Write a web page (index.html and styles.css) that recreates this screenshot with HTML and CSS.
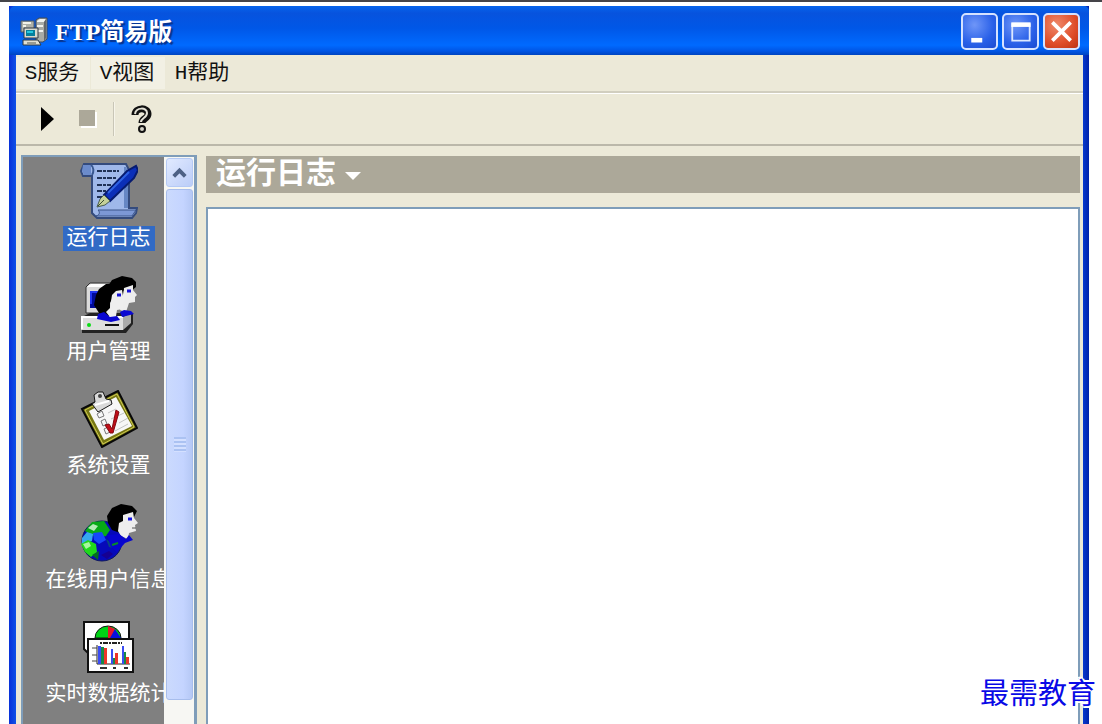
FILE: index.html
```html
<!DOCTYPE html>
<html lang="zh-CN">
<head>
<meta charset="utf-8">
<title>FTP简易版</title>
<link rel="stylesheet" href="styles.css">
</head>
<body>
<div class="window">
  <header class="titlebar">
    <svg class="app-icon" viewBox="0 0 28 29" aria-hidden="true">
      <path d="M1 4h13v11H1z" fill="#aeb0a8" stroke="#4d5968"/>
      <path d="M3 6h8M3 9h3" stroke="#f2f2e9" stroke-width="2"/>
      <path d="M16 3l3-2h8v21l-4 3h-7z" fill="#a9aba6" stroke="#3f4a58"/>
      <path d="M17 4l3-2h6l-2 3h-7zM17 8h6v2h-6zM17 13h6v2h-6z" fill="#f1f2ee"/>
      <path d="M24 5v19l2-3V2z" fill="#62666a"/>
      <path d="M4 11h14v10H4z" fill="#d9dad0" stroke="#303945"/>
      <path d="M6 13h9v6H6z" fill="#057f9c"/>
      <path d="M7 14h6v2H7z" fill="#25c7df"/>
      <path d="M3 23h15l3 5H3z" fill="#dfdfd2" stroke="#30383f"/>
      <path d="M7 26h9" stroke="#52564f"/>
    </svg>
    <h1 class="title">FTP简易版</h1>
    <div class="controls">
      <button class="control" type="button" aria-label="最小化"><svg viewBox="0 0 36 36"><path d="M9 25h12v5H9z" fill="#fff"/></svg></button>
      <button class="control" type="button" aria-label="最大化"><svg viewBox="0 0 36 36"><path d="M9 10h19v18H9z" fill="none" stroke="#dce8ff" stroke-width="2"/><path d="M8 8h21v5H8z" fill="#fff"/></svg></button>
      <button class="control control-close" type="button" aria-label="关闭"><svg viewBox="0 0 36 36"><path d="M8 8l20 20M28 8L8 28" stroke="#fff" stroke-width="4"/></svg></button>
    </div>
  </header>

  <nav class="menubar">
    <button class="menu" type="button">S服务</button>
    <button class="menu" type="button">V视图</button>
    <button class="menu" type="button">H帮助</button>
  </nav>

  <div class="toolbar">
    <button class="tool" type="button" aria-label="启动"><svg viewBox="0 0 28 28"><path d="M8 2v24l13-12z" fill="#000"/></svg></button>
    <button class="tool" type="button" aria-label="停止"><svg viewBox="0 0 28 28"><path d="M8 7h16v16H8z" fill="#fff"/><path d="M6 5h16v16H6z" fill="#aca899"/></svg></button>
    <span class="separator"></span>
    <button class="tool" type="button" aria-label="帮助"><svg viewBox="0 0 28 28"><path d="M8 10c0-8 13-8 13-1 0 5-6 4-6 9" fill="none" stroke="#111" stroke-width="7"/><path d="M8 9c1-7 12-7 12-1 0 5-6 5-6 9" fill="none" stroke="#e4e2d7" stroke-width="2"/><circle cx="15" cy="24" r="3" fill="#d5d3c8" stroke="#111" stroke-width="2"/></svg></button>
  </div>

  <div class="workspace">
    <aside class="sidebar">
      <div class="items">
        <button class="item selected" type="button">
          <svg class="item-icon" viewBox="0 0 58 58" aria-hidden="true">
            <path d="M4 2h42l3 6v38h8l-1 5-4 5H17l-5-5V14H3L1 9z" fill="#9fb8ea" stroke="#344b7d" stroke-width="2"/>
            <path d="M3 3h8v10H4L2 9z" fill="#6b8bcb"/><path d="M11 3c3 2 3 7 1 10" fill="none" stroke="#38578f" stroke-width="2"/>
            <path d="M18 48h38l-4 6H16c4-1 4-4 2-6z" fill="#7c98d6" stroke="#3a5489"/>
            <path d="M46 5l2 4v37h-4V5z" fill="#6687c4"/>
            <path d="M17 9h22M17 16h19M17 23h14M17 29h9M17 35h6" stroke="#1f3156" stroke-width="2" stroke-dasharray="5 1 3 1"/>
            <path d="M49 17l-5 8" stroke="#1d2e5b" stroke-width="3"/>
            <path d="M24 33L47 9l9-5 2 4-4 8-24 23z" fill="#0b2fb8" stroke="#061b70" stroke-width="2"/>
            <path d="M28 31L49 10" stroke="#2f62e3" stroke-width="2"/>
            <path d="M24 33l6 6-5 4-8 2 3-8z" fill="#c5d198" stroke="#485d51"/><path d="M18 44l6-6" stroke="#394a30"/>
          </svg>
          <span class="label">运行日志</span>
        </button>
        <button class="item" type="button">
          <svg class="item-icon" viewBox="0 0 58 58" aria-hidden="true">
            <path d="M6 11l4-4h23v30H6z" fill="#dadada" stroke="#333"/><path d="M7 11l4-3h20l-2 3z" fill="#fff"/>
            <path d="M10 15h16v17H10z" fill="#000b97"/><path d="M11 28V16h8" fill="none" stroke="#2035ee" stroke-width="2"/>
            <path d="M2 41l8-4h43v11l-7 9H2z" fill="#222"/><path d="M1 41h42v13H1z" fill="#dedede"/><path d="M43 41l8-4v10l-8 7z" fill="#aaa"/>
            <path d="M1 41h42M2 41v12" stroke="#fff" stroke-width="2"/><path d="M25 49h14" stroke="#111" stroke-width="2"/><circle cx="9" cy="49" r="2" fill="#0bdc16"/>
            <path d="M28 10l4-6 10-4 10 2 4 4v5l-5 4-9 14-8 2z" fill="#000"/>
            <path d="M44 12l9-3v5l4 5-2 2v5l-6 1-3 9-6-2 2-9z" fill="#ededed"/><path d="M47 15h4" stroke="#1712d4" stroke-width="3"/><path d="M40 36l4-2 7 1 3 3-12 3z" fill="#0b08d1"/>
            <path d="M16 19l3-6 7-5 10-1 6 3 2 4-4 3-6 2-4 8v11l-5 2-6-3-5-8z" fill="#000"/>
            <path d="M32 19l4-4 6-1 1 6 2 5-2 2v6l-6 1-1 6-6 1-4-5 4-4z" fill="#eee"/><path d="M37 19h4" stroke="#1712d4" stroke-width="3"/>
            <path d="M18 38l6-2 6 5 7-1 3 4-9 2-14-3z" fill="#0906d1"/>
          </svg>
          <span class="label">用户管理</span>
        </button>
        <button class="item" type="button">
          <svg class="item-icon" viewBox="0 0 58 58" aria-hidden="true">
            <path d="M2 19L38 1l19 37-35 19z" fill="#777713" stroke="#080808" stroke-width="2"/>
            <path d="M5 20L37 4l17 33-31 17z" fill="none" stroke="#d1cc56" stroke-width="1"/>
            <path d="M9 21l27-14 16 29-28 14z" fill="#f7f7f7"/>
            <path d="M17 24l5-3 2 5-5 2zM21 31l4-2 2 5-4 2zM24 39l4-2 2 5-4 2z" fill="none" stroke="#777" stroke-width="1"/>
            <path d="M28 23l8-4M31 29l13-6M39 33l9-5M35 41l13-7" stroke="#c4c4c4" stroke-width="1"/>
            <path d="M25 35l4-1 3 5 4-19 3 2-6 21h-3z" fill="#c10e18" stroke="#81070f" stroke-width="1"/>
            <path d="M12 14l3-2-1-7 4-3h5l3 7 5 1 1 4-14 8z" fill="#d9d9d9" stroke="#171717"/><path d="M15 15l14-4" stroke="#fff" stroke-width="2"/><circle cx="20" cy="6" r="2" fill="#444"/>
          </svg>
          <span class="label">系统设置</span>
        </button>
        <button class="item" type="button">
          <svg class="item-icon" viewBox="0 0 58 58" aria-hidden="true">
            <circle cx="22" cy="37" r="20" fill="#0609b9" stroke="#111b5c"/>
            <path d="M5 27l7-9 12-1 6 9-4 6-9 2-7-4z" fill="#07ab17"/><path d="M8 24l5-4 5 2-4 5z" fill="#b3ecb6"/>
            <path d="M2 34l5-6 6 2-1 7-10 3z" fill="#36a7ef"/><path d="M13 29l9-1 4 8-7 4-5-4z" fill="#1647fb"/>
            <path d="M1 40l7-4 8 4 1 8-6 5-6-5z" fill="#21d91b"/><path d="M3 40l6-2 2 4-5 3z" fill="#a8f6a0"/><path d="M12 51l7-4-1 9z" fill="#046d20"/><path d="M26 35l7 5 6-2-2 7-8-2z" fill="#074583"/><path d="M21 51l8-4 4 3-6 5z" fill="#160092"/>
            <path d="M27 12L32 4l9-4 11 2 5 5-3 6-10 4-4 12-8-3-4-7z" fill="#000"/>
            <path d="M43 11l10-3 1 6 4 5-3 2 1 6-7 2-1 6-7-3-3-5 1-8 4-2z" fill="#ededed"/><path d="M48 15h4" stroke="#1714e1" stroke-width="3"/><path d="M52 24h4" stroke="#555" stroke-width="1"/>
            <path d="M27 31l12-1 7 5 3-4 4 5-8 3-8 9-6-5z" fill="#0705cf"/><path d="M32 41l6-2" stroke="#058d28" stroke-width="2"/>
          </svg>
          <span class="label">在线用户信息</span>
        </button>
        <button class="item" type="button">
          <svg class="item-icon" viewBox="0 0 58 58" aria-hidden="true">
            <path d="M4 4h45v31H8l-4-4z" fill="#fff" stroke="#111" stroke-width="2"/>
            <path d="M15 20a13 12 0 0 1 26 0z" fill="#00d315" stroke="#111"/><path d="M28 20V8l7 3-3 9z" fill="#e4162b"/><path d="M30 20l5-9 6 9z" fill="#0711de"/>
            <path d="M8 21h45v33H8z" fill="#fff" stroke="#111" stroke-width="2"/>
            <path d="M20 25h22" stroke="#222" stroke-width="2" stroke-dasharray="2 1 5 1"/><path d="M17 27v19h33" fill="none" stroke="#222"/><path d="M12 30h5M12 37h5M12 43h5" stroke="#444"/>
            <path d="M18 28h3v18h-3zM31 31h2v15h-2zM42 28h2v18h-2z" fill="#3b4cf3"/><path d="M21 29h3v17h-3zM33 40h2v6h-2zM44 34h2v12h-2z" fill="#178a45"/><path d="M24 30h3v16h-3zM35 35h3v11h-3zM46 39h3v7h-3z" fill="#ed3529"/>
            <path d="M20 50h7M33 50h3M44 50h4" stroke="#333" stroke-width="2"/>
          </svg>
          <span class="label">实时数据统计</span>
        </button>
      </div>
      <div class="scrollbar">
        <button class="scroll-up" type="button" aria-label="向上滚动"><svg viewBox="0 0 26 28"><path d="M7 18l6-6 6 6" fill="none" stroke="#4d6185" stroke-width="4"/></svg></button>
        <div class="thumb"><span class="grip"></span></div>
      </div>
    </aside>
    <main class="content">
      <button class="heading" type="button">运行日志<svg class="arrow" viewBox="0 0 16 8" aria-hidden="true"><path d="M0 0h16L8 8z" fill="#fff"/></svg></button>
      <textarea class="log" aria-label="运行日志" readonly></textarea>
    </main>
  </div>
</div>
<div class="watermark">最需教育</div>
</body>
</html>
```
FILE: styles.css
```css
* { box-sizing: border-box; }

body {
  margin: 0;
  height: 100vh;
  display: flex;
  overflow: hidden;
  background: #fff;
  border-top: 2px solid #454449;
  padding: 4px 13px 0 9px;
  font-family: "Liberation Mono", "Noto Sans CJK SC", sans-serif;
}

button {
  margin: 0;
  padding: 0;
  border: 0;
  background: none;
  color: inherit;
  font: inherit;
}

svg { display: block; }

.window {
  flex: 1;
  min-width: 0;
  display: flex;
  flex-direction: column;
  background: #ece9d8;
  border: solid #0741dc;
  border-width: 0 6px 0 7px;
  border-image: linear-gradient(90deg, #0831d9, #1665f0 1%, #0c4cec 99%, #0022a9) 6 6 0 7;
  border-radius: 8px 5px 0 0;
}

.titlebar {
  flex: none;
  height: 49px;
  margin: 0 -6px 0 -7px;
  padding: 2px 9px 0 11px;
  display: flex;
  align-items: center;
  border-radius: 7px 5px 0 0;
  background: linear-gradient(#0663ec 0, #0753de 15%, #0057e7 45%, #006aff 80%, #0055e5 92%, #0044c0);
}

.app-icon { width: 28px; height: 29px; }

.title {
  flex: 1;
  margin: 0 0 0 7px;
  color: #fff;
  font: bold 24px/32px "Liberation Serif", "Noto Sans CJK SC", serif;
  text-shadow: 2px 2px 1px #07348f;
}

.controls { display: flex; gap: 4px; }

.control {
  width: 37px;
  height: 37px;
  border: 2px solid #d5e2ff;
  border-radius: 5px;
  background: radial-gradient(circle at 35% 30%, #6f96f8, #2960e8 60%, #1b4bd1);
}

.control-close { background: radial-gradient(circle at 35% 30%, #ef8a6b, #df4d29 60%, #bd3212); }

.menubar {
  flex: none;
  height: 38px;
  display: flex;
  gap: 1px;
  padding-top: 2px;
  border-bottom: 2px solid #d1cebf;
}

.menu {
  width: 74px;
  height: 32px;
  padding: 2px 2px 0 0;
  background: #f2f0e4;
  color: #111;
  font-size: 21px;
  line-height: 30px;
  white-space: nowrap;
}

.menu:last-child { background: none; }

.toolbar {
  flex: none;
  height: 53px;
  display: flex;
  align-items: center;
  gap: 12px;
  padding-left: 17px;
  border-top: 1px solid #fff;
  border-bottom: 2px solid #bbb8aa;
}

.tool { width: 28px; height: 28px; }

.separator {
  width: 2px;
  height: 34px;
  background: #c9c6b7;
  border-right: 1px solid #f7f5ea;
}

.workspace {
  flex: 1;
  min-height: 0;
  display: grid;
  grid-template-columns: 176px minmax(0, 1fr);
  gap: 9px;
  padding: 9px 3px 0 5px;
}

.sidebar {
  min-height: 0;
  display: grid;
  grid-template-columns: minmax(0, 1fr) 30px;
  grid-template-rows: minmax(0, 1fr);
  overflow: hidden;
  background: #808080;
  border: solid #7f9db9;
  border-width: 2px 3px 0 2px;
}

.items {
  grid-area: 1 / 1 / 2 / 3;
  display: flex;
  flex-direction: column;
  align-items: center;
  gap: 25px;
  padding-top: 5px;
}

.item {
  flex: none;
  display: flex;
  flex-direction: column;
  align-items: center;
  gap: 6px;
  color: #fff;
  font-size: 21px;
  line-height: 25px;
  white-space: nowrap;
}

.item-icon { width: 58px; height: 58px; }

.label { height: 25px; padding: 0 4px; }

.selected .label { background: #316ac5; }

.scrollbar {
  grid-area: 1 / 2 / 2 / 3;
  display: flex;
  flex-direction: column;
  gap: 2px;
  padding: 1px 1px 24px 2px;
  background: #f7f7f3;
  z-index: 1;
}

.scroll-up {
  flex: none;
  height: 29px;
  border: 1px solid #b5caf5;
  border-radius: 3px;
  background: linear-gradient(135deg, #e1eaff, #bbcdf8);
}

.thumb {
  flex: 1;
  display: flex;
  align-items: center;
  justify-content: center;
  border: 1px solid #a7bdec;
  border-radius: 3px;
  background: linear-gradient(90deg, #cbdafd, #c4d4ff 65%, #b5c8f5);
}

.grip {
  width: 12px;
  height: 15px;
  background: repeating-linear-gradient(#abc2f2 0 2px, #d4e0ff 2px 4px);
}

.content {
  min-width: 0;
  min-height: 0;
  display: flex;
  flex-direction: column;
  gap: 14px;
  padding-top: 1px;
}

.heading {
  flex: none;
  height: 37px;
  display: flex;
  align-items: center;
  gap: 9px;
  padding: 0 0 0 10px;
  background: #aca899;
  color: #fff;
  font-size: 30px;
  font-weight: bold;
  line-height: 36px;
}

.arrow { width: 16px; height: 8px; margin-top: 3px; }

.log {
  flex: 1;
  min-height: 0;
  width: 100%;
  border: 2px solid #7f9db9;
  border-bottom: 0;
  background: #fff;
  resize: none;
  outline: 0;
}

.watermark {
  position: absolute;
  right: 6px;
  bottom: 14px;
  color: #0909e6;
  font-family: "Noto Sans CJK SC", sans-serif;
  font-size: 29px;
  line-height: 38px;
  text-shadow: 2px 0 #fff, -2px 0 #fff, 0 2px #fff, 0 -2px #fff, 2px 2px #fff, -2px -2px #fff;
}
```
